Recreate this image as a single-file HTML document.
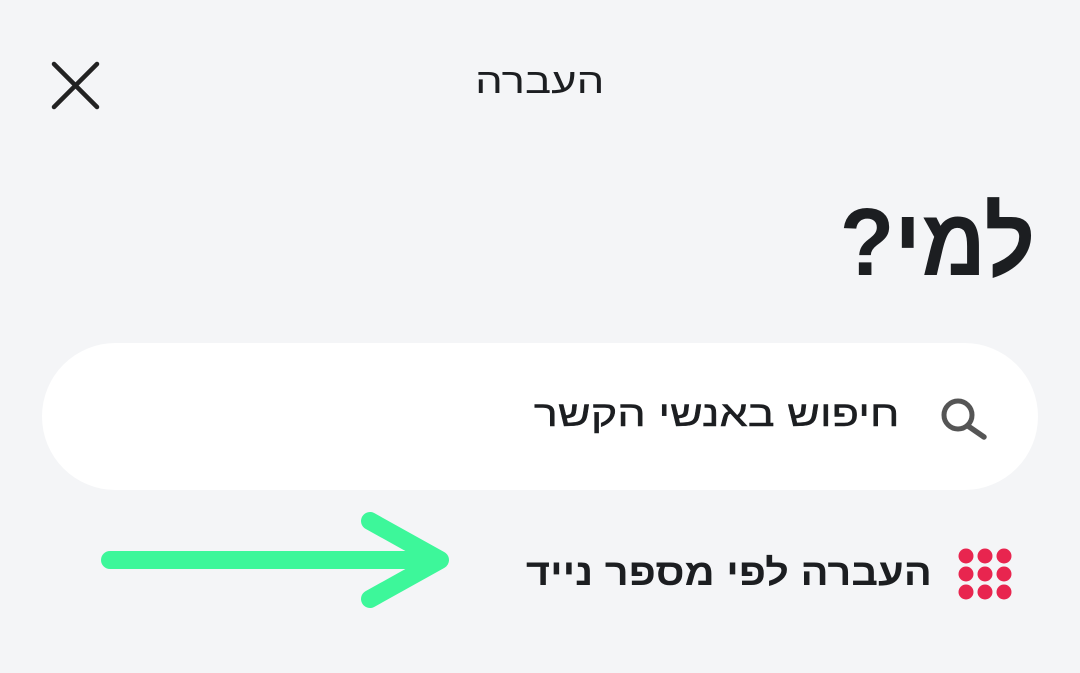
<!DOCTYPE html>
<html><head><meta charset="utf-8"><style>
body{margin:0;width:1080px;height:673px;background:#f4f5f7;position:relative;overflow:hidden;font-family:"Liberation Sans","DejaVu Sans",sans-serif;color:#1c1e21}
.t{position:absolute;direction:rtl;white-space:nowrap;transform-origin:right center}
</style></head><body>
<svg style="position:absolute;left:0;top:0" width="1080" height="673">
<path d="M54 64L97 107M97 64L54 107" stroke="#222" stroke-width="4.5" stroke-linecap="round"/>
<rect x="42" y="343" width="996" height="147" rx="73.5" fill="#fff"/>
<circle cx="958" cy="415" r="14" fill="none" stroke="#555" stroke-width="5"/>
<path d="M968 426L984 437" stroke="#555" stroke-width="5.5" stroke-linecap="round"/>
<g fill="#e8254f">
<circle cx="966" cy="556" r="7.5"/><circle cx="985" cy="556" r="7.5"/><circle cx="1004" cy="556" r="7.5"/>
<circle cx="966" cy="574" r="7.5"/><circle cx="985" cy="574" r="7.5"/><circle cx="1004" cy="574" r="7.5"/>
<circle cx="966" cy="592" r="7.5"/><circle cx="985" cy="592" r="7.5"/><circle cx="1004" cy="592" r="7.5"/>
</g>
<path d="M110 560H438M370 521L440 560L370 599" fill="none" stroke="#3df79a" stroke-width="18" stroke-linecap="round" stroke-linejoin="round"/>
</svg>
<div class="t" style="right:476px;top:62px;font-size:35px;transform:scaleX(1.25)">העברה</div>
<div class="t" style="right:45px;top:188px;font-size:96px;font-weight:bold;transform:scaleX(0.93)">למי?</div>
<div class="t" style="right:180px;top:393px;font-size:36px;transform:scaleX(1.25);-webkit-text-stroke:0.4px #1c1e21">חיפוש באנשי הקשר</div>
<div class="t" style="right:148px;top:552px;font-size:37px;font-weight:bold;transform:scaleX(1.125)">העברה לפי מספר נייד</div>
</body></html>
